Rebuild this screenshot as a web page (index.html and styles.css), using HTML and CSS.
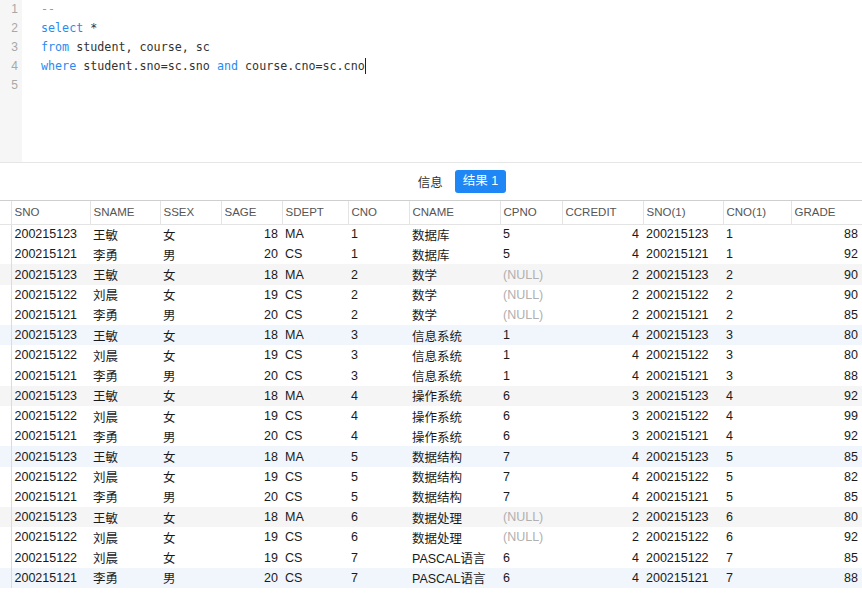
FILE: index.html
```html
<!DOCTYPE html>
<html>
<head>
<meta charset="utf-8">
<link rel="stylesheet" href="styles.css">
</head>
<body>
<div class="editor">
  <div class="gutter">
    <div>1</div><div>2</div><div>3</div><div>4</div><div>5</div>
  </div>
  <div class="code">
    <div class="ln cmt">--</div>
    <div class="ln"><span class="kw">select</span> *</div>
    <div class="ln"><span class="kw">from</span> student, course, sc</div>
    <div class="ln"><span class="kw">where</span> student.sno=sc.sno <span class="kw">and</span> course.cno=sc.cno<span class="caret"></span></div>
    <div class="ln">&nbsp;</div>
  </div>
</div>
<div class="tabs">
  <span class="tab">信息</span>
  <span class="tab active">结果 1</span>
</div>
<div class="grid">
<table>
  <colgroup>
    <col style="width:11px"><col style="width:79px"><col style="width:70px"><col style="width:61px"><col style="width:61px"><col style="width:66px"><col style="width:61px"><col style="width:91px"><col style="width:62px"><col style="width:81px"><col style="width:80px"><col style="width:68px"><col style="width:71px">
  </colgroup>
  <thead>
    <tr><th class="g"></th><th>SNO</th><th>SNAME</th><th>SSEX</th><th>SAGE</th><th>SDEPT</th><th>CNO</th><th>CNAME</th><th>CPNO</th><th>CCREDIT</th><th>SNO(1)</th><th>CNO(1)</th><th>GRADE</th></tr>
  </thead>
  <tbody id="rows"></tbody>
</table>
</div>
<script src="app.js"></script>
</body>
</html>
```
FILE: app.js
```js
const data = [
["200215123","王敏","女",18,"MA","1","数据库","5",4,"200215123","1",88],
["200215121","李勇","男",20,"CS","1","数据库","5",4,"200215121","1",92],
["200215123","王敏","女",18,"MA","2","数学",null,2,"200215123","2",90],
["200215122","刘晨","女",19,"CS","2","数学",null,2,"200215122","2",90],
["200215121","李勇","男",20,"CS","2","数学",null,2,"200215121","2",85],
["200215123","王敏","女",18,"MA","3","信息系统","1",4,"200215123","3",80],
["200215122","刘晨","女",19,"CS","3","信息系统","1",4,"200215122","3",80],
["200215121","李勇","男",20,"CS","3","信息系统","1",4,"200215121","3",88],
["200215123","王敏","女",18,"MA","4","操作系统","6",3,"200215123","4",92],
["200215122","刘晨","女",19,"CS","4","操作系统","6",3,"200215122","4",99],
["200215121","李勇","男",20,"CS","4","操作系统","6",3,"200215121","4",92],
["200215123","王敏","女",18,"MA","5","数据结构","7",4,"200215123","5",85],
["200215122","刘晨","女",19,"CS","5","数据结构","7",4,"200215122","5",82],
["200215121","李勇","男",20,"CS","5","数据结构","7",4,"200215121","5",85],
["200215123","王敏","女",18,"MA","6","数据处理",null,2,"200215123","6",80],
["200215122","刘晨","女",19,"CS","6","数据处理",null,2,"200215122","6",92],
["200215122","刘晨","女",19,"CS","7","PASCAL语言","6",4,"200215122","7",85],
["200215121","李勇","男",20,"CS","7","PASCAL语言","6",4,"200215121","7",88]
];
const tb = document.getElementById("rows");
data.forEach((r, i) => {
  const tr = document.createElement("tr");
  if (i % 6 === 2) tr.className = "grey";
  if (i % 6 === 5) tr.className = "blue";
  const g = document.createElement("td");
  g.className = "g";
  tr.appendChild(g);
  r.forEach((v) => {
    const td = document.createElement("td");
    if (typeof v === "number") td.className = "num";
    if (v === null) { td.className = "null"; td.textContent = "(NULL)"; }
    else td.textContent = v;
    tr.appendChild(td);
  });
  tb.appendChild(tr);
});
```
FILE: styles.css
```css
html, body { margin: 0; padding: 0; background: #fff; }
body { width: 862px; height: 595px; overflow: hidden; font-family: "Liberation Sans", "Noto Sans CJK SC", sans-serif; }

.editor { display: flex; height: 163px; border-bottom: 1px solid #e6e6e6; box-sizing: border-box; }
.gutter { width: 22px; background: #f6f6f6; color: #a8a8a8; font-family: "Liberation Sans", sans-serif; font-size: 12px; line-height: 19px; text-align: right; padding-right: 4px; box-sizing: border-box; }
.code { padding-left: 19px; font-family: "DejaVu Sans Mono", monospace; font-size: 11.7px; line-height: 19px; color: #333; }
.ln { white-space: pre; height: 19px; }
.kw { color: #2a8af0; }
.cmt { color: #999; }
.caret { display: inline-block; width: 1px; height: 16px; background: #222; vertical-align: -4px; }

.tabs { height: 37px; display: flex; align-items: center; justify-content: center; gap: 12px; border-bottom: 1px solid #cfcfcf; padding-left: 62px; }
.tab { font-size: 12.5px; color: #333; white-space: nowrap; }
.tab.active { background: #1f86f5; color: #fff; border-radius: 3px; height: 23px; line-height: 23px; padding: 0 8px; text-align: center; }

.grid { position: relative; }
table { border-collapse: collapse; table-layout: fixed; width: 862px; }
th { height: 23px; font-weight: normal; font-size: 11.5px; color: #555; text-align: left; padding: 0 0 0 3px; border-bottom: 1px solid #e4e4e4; border-left: 1px solid #e4e4e4; box-sizing: border-box; white-space: nowrap; overflow: hidden; }
th.g { border-left: none; padding: 0; }
td { height: 20.23px; padding: 0 0 0 3px; font-size: 12.5px; color: #1a1a1a; white-space: nowrap; overflow: hidden; box-sizing: border-box; font-family: "Liberation Sans", "Noto Sans CJK SC", sans-serif; }
td.g { padding: 0; border-right: 1px solid #dcdcdc; }
td.num { text-align: right; padding: 0 4px 0 0; }
td.null { color: #b0b0b0; }
tr.grey td { background: #f5f5f5; }
tr.blue td { background: #f1f6fc; }
```
